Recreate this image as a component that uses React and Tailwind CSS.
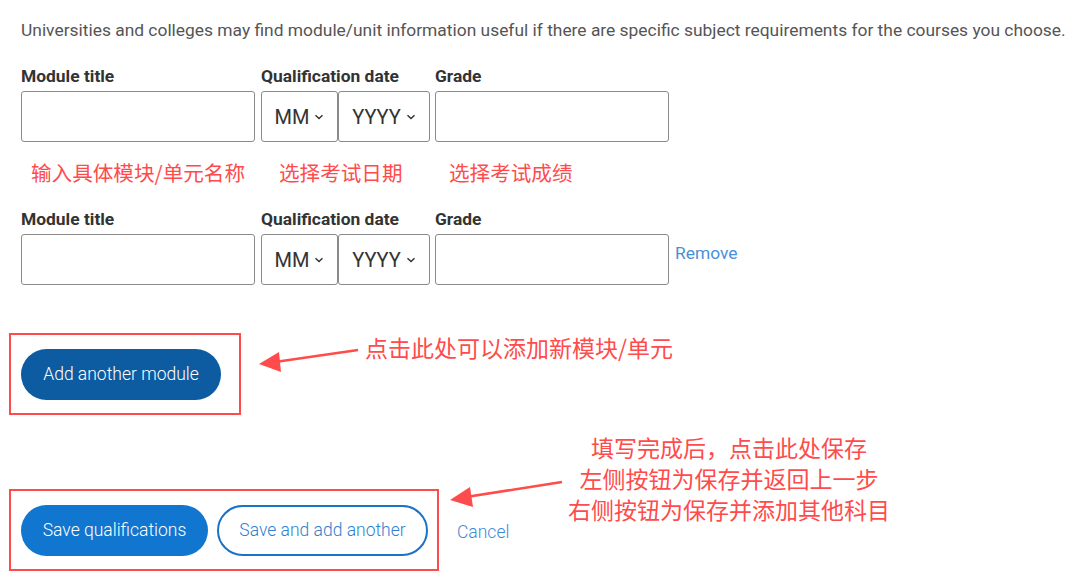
import React from 'react'

const ANNO = 'text-[#ff4b4b] font-["Noto_Sans_CJK_SC",sans-serif]'

function Chevron() {
  return (
    <svg width="10" height="6" viewBox="0 0 10 6" className="ml-[5px]">
      <path d="M1.5 1.2 L5 4.6 L8.5 1.2" fill="none" stroke="#333" strokeWidth="1.4" />
    </svg>
  )
}

function ModuleRow({ remove }) {
  return (
    <div>
      <div className="flex text-[17.4px] font-bold text-[#333] leading-[22px]">
        <div className="w-[240px]">Module title</div>
        <div className="w-[174px]">Qualification date</div>
        <div>Grade</div>
      </div>
      <div className="flex items-start mt-[4px]">
        <div className="w-[234px] h-[51px] border border-[#8a8a8a] rounded-[3px]" />
        <div className="ml-[6px] flex">
          <div className="w-[77px] h-[51px] border border-[#8a8a8a] rounded-[3px] flex items-center justify-center text-[20px] text-[#333]">
            MM<Chevron />
          </div>
          <div className="w-[92px] h-[51px] border border-[#8a8a8a] rounded-[3px] flex items-center justify-center text-[20px] text-[#333]">
            YYYY<Chevron />
          </div>
        </div>
        <div className="ml-[5px] w-[234px] h-[51px] border border-[#8a8a8a] rounded-[3px]" />
        {remove && <a className="ml-[6px] mt-[6px] text-[17.4px] text-[#4a90d9]">Remove</a>}
      </div>
    </div>
  )
}

export default function App() {
  return (
    <div className="relative w-[1080px] h-[582px] bg-white overflow-hidden font-['Roboto',sans-serif]">
      <div className="pl-[21px] pt-[19px]">
        <p className="text-[17.4px] leading-[22px] text-[#555] whitespace-nowrap">
          Universities and colleges may find module/unit information useful if there are specific subject requirements for the courses you choose.
        </p>

        <div className="mt-[24px]">
          <ModuleRow />
        </div>

        <div className={`flex text-[20.6px] leading-[28px] mt-[16px] ${ANNO}`}>
          <span className="ml-[10px] w-[248px]">输入具体模块/单元名称</span>
          <span className="w-[170px]">选择考试日期</span>
          <span>选择考试成绩</span>
        </div>

        <div className="mt-[22px]">
          <ModuleRow remove />
        </div>
      </div>

      <div className="ml-[9px] mt-[48px] w-[232px] h-[82px] border-2 border-[#ff4b4b] flex items-center pl-[10px]">
        <button className="h-[51px] w-[200px] rounded-full bg-[#0d5ba1] text-white text-[17.5px] font-light">
          Add another module
        </button>
      </div>

      <div className="ml-[9px] mt-[74px] w-[430px] h-[82px] border-2 border-[#ff4b4b] flex items-center pl-[10px]">
        <button className="h-[51px] w-[187px] rounded-full bg-[#1176d0] text-white text-[17.5px] font-light">
          Save qualifications
        </button>
        <button className="ml-[9px] h-[51px] w-[211px] rounded-full border-2 border-[#1a73c9] text-[#2f80cf] text-[17.5px] font-light">
          Save and add another
        </button>
      </div>
      <a className="absolute left-[457px] top-[519px] text-[17.5px] font-light text-[#3d8ad6]">Cancel</a>

      <svg className="absolute inset-0 pointer-events-none" width="1080" height="582">
        <line x1="358" y1="350" x2="275" y2="362" stroke="#ff4b4b" strokeWidth="2.5" />
        <polygon points="259,364 279,352 281,372" fill="#ff4b4b" />
        <line x1="562" y1="482" x2="466" y2="497" stroke="#ff4b4b" strokeWidth="2.5" />
        <polygon points="450,500 470,487 473,507" fill="#ff4b4b" />
      </svg>

      <div className={`absolute left-[365px] top-[332px] text-[23px] leading-[30px] ${ANNO}`}>
        点击此处可以添加新模块/单元
      </div>
      <div className={`absolute left-[549px] top-[432px] w-[360px] text-center text-[23px] leading-[31px] ${ANNO}`}>
        <div>填写完成后，点击此处保存</div>
        <div>左侧按钮为保存并返回上一步</div>
        <div>右侧按钮为保存并添加其他科目</div>
      </div>
    </div>
  )
}
